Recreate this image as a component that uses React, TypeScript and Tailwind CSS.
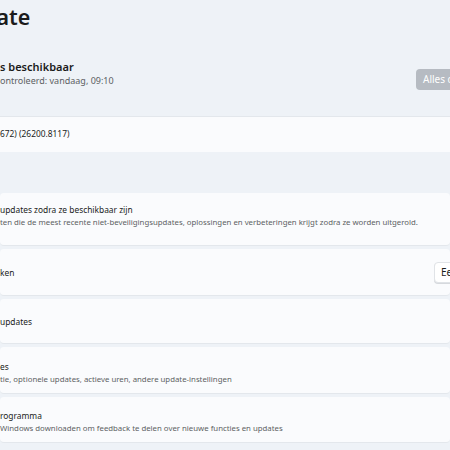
const font = { fontFamily: '"Segoe UI", "Noto Sans", "Open Sans", sans-serif' };

type Row = {
  title: string;
  sub?: string;
  height: string;
  shift: string;
  action?: string;
};

const rows: Row[] = [
  {
    title: 'updates zodra ze beschikbaar zijn',
    sub: 'ten die de meest recente niet-beveiligingsupdates, oplossingen en verbeteringen krijgt zodra ze worden uitgerold.',
    height: 'h-[53px]',
    shift: 'pb-[6px]',
  },
  { title: 'ken', height: 'h-[47px]', shift: '', action: 'Een week onderbreken' },
  { title: 'updates', height: 'h-[45px]', shift: 'pt-[1px]' },
  {
    title: 'es',
    sub: 'tie, optionele updates, actieve uren, andere update-instellingen',
    height: 'h-[47px]',
    shift: 'pt-[5px]',
  },
  {
    title: 'rogramma',
    sub: 'Windows downloaden om feedback te delen over nieuwe functies en updates',
    height: 'h-[46px]',
    shift: 'pt-[4px]',
  },
];

export default function App() {
  return (
    <div
      className="w-[450px] h-[450px] overflow-hidden bg-[#eef2f7] text-[#1b1b1b] flex flex-col"
      style={font}
    >
      <div className="h-[34px] flex items-center">
        <h1 className="-ml-[17px] text-[21.5px] font-semibold leading-none">date</h1>
      </div>

      <div className="h-[82px] flex items-start justify-between pt-[25px]">
        <div className="flex flex-col">
          <span className="text-[11px] font-semibold leading-[15px]">s beschikbaar</span>
          <span className="text-[9px] leading-[14px] text-[#5c5f63]">ontroleerd: vandaag, 09:10</span>
        </div>
        <button className="mt-[10px] mr-[-80px] h-[21px] w-[114px] rounded-[4px] bg-[#b6bbc2] px-[7px] text-left text-[10px] text-white whitespace-nowrap">
          Alles downloaden
        </button>
      </div>

      <div className="h-[36px] bg-[#fafbfd] border-t border-[#e3e7ec] flex items-center">
        <span className="text-[8.4px]">672) (26200.8117)</span>
      </div>

      <div className="h-[41px]" />

      <div className="flex flex-col gap-[3px]">
        {rows.map((row) => (
          <div
            key={row.title}
            className={`${row.height} bg-[#fafbfd] border-b border-[#e3e7ec] rounded-[4px] flex items-center justify-between`}
          >
            <div className={`flex flex-col ${row.shift}`}>
              <span className="text-[8.4px] leading-[13px] whitespace-nowrap">{row.title}</span>
              {row.sub && (
                <span className="text-[7.8px] leading-[13px] text-[#5c5f63] whitespace-nowrap">{row.sub}</span>
              )}
            </div>
            {row.action && (
              <button className="mr-[-90px] h-[21px] w-[106px] shrink-0 rounded-[4px] border border-[#e0e3e7] bg-white px-[6px] text-left text-[10px] whitespace-nowrap shadow-[0_1px_0_#d6d9dd]">
                {row.action}
              </button>
            )}
          </div>
        ))}
      </div>
    </div>
  );
}
